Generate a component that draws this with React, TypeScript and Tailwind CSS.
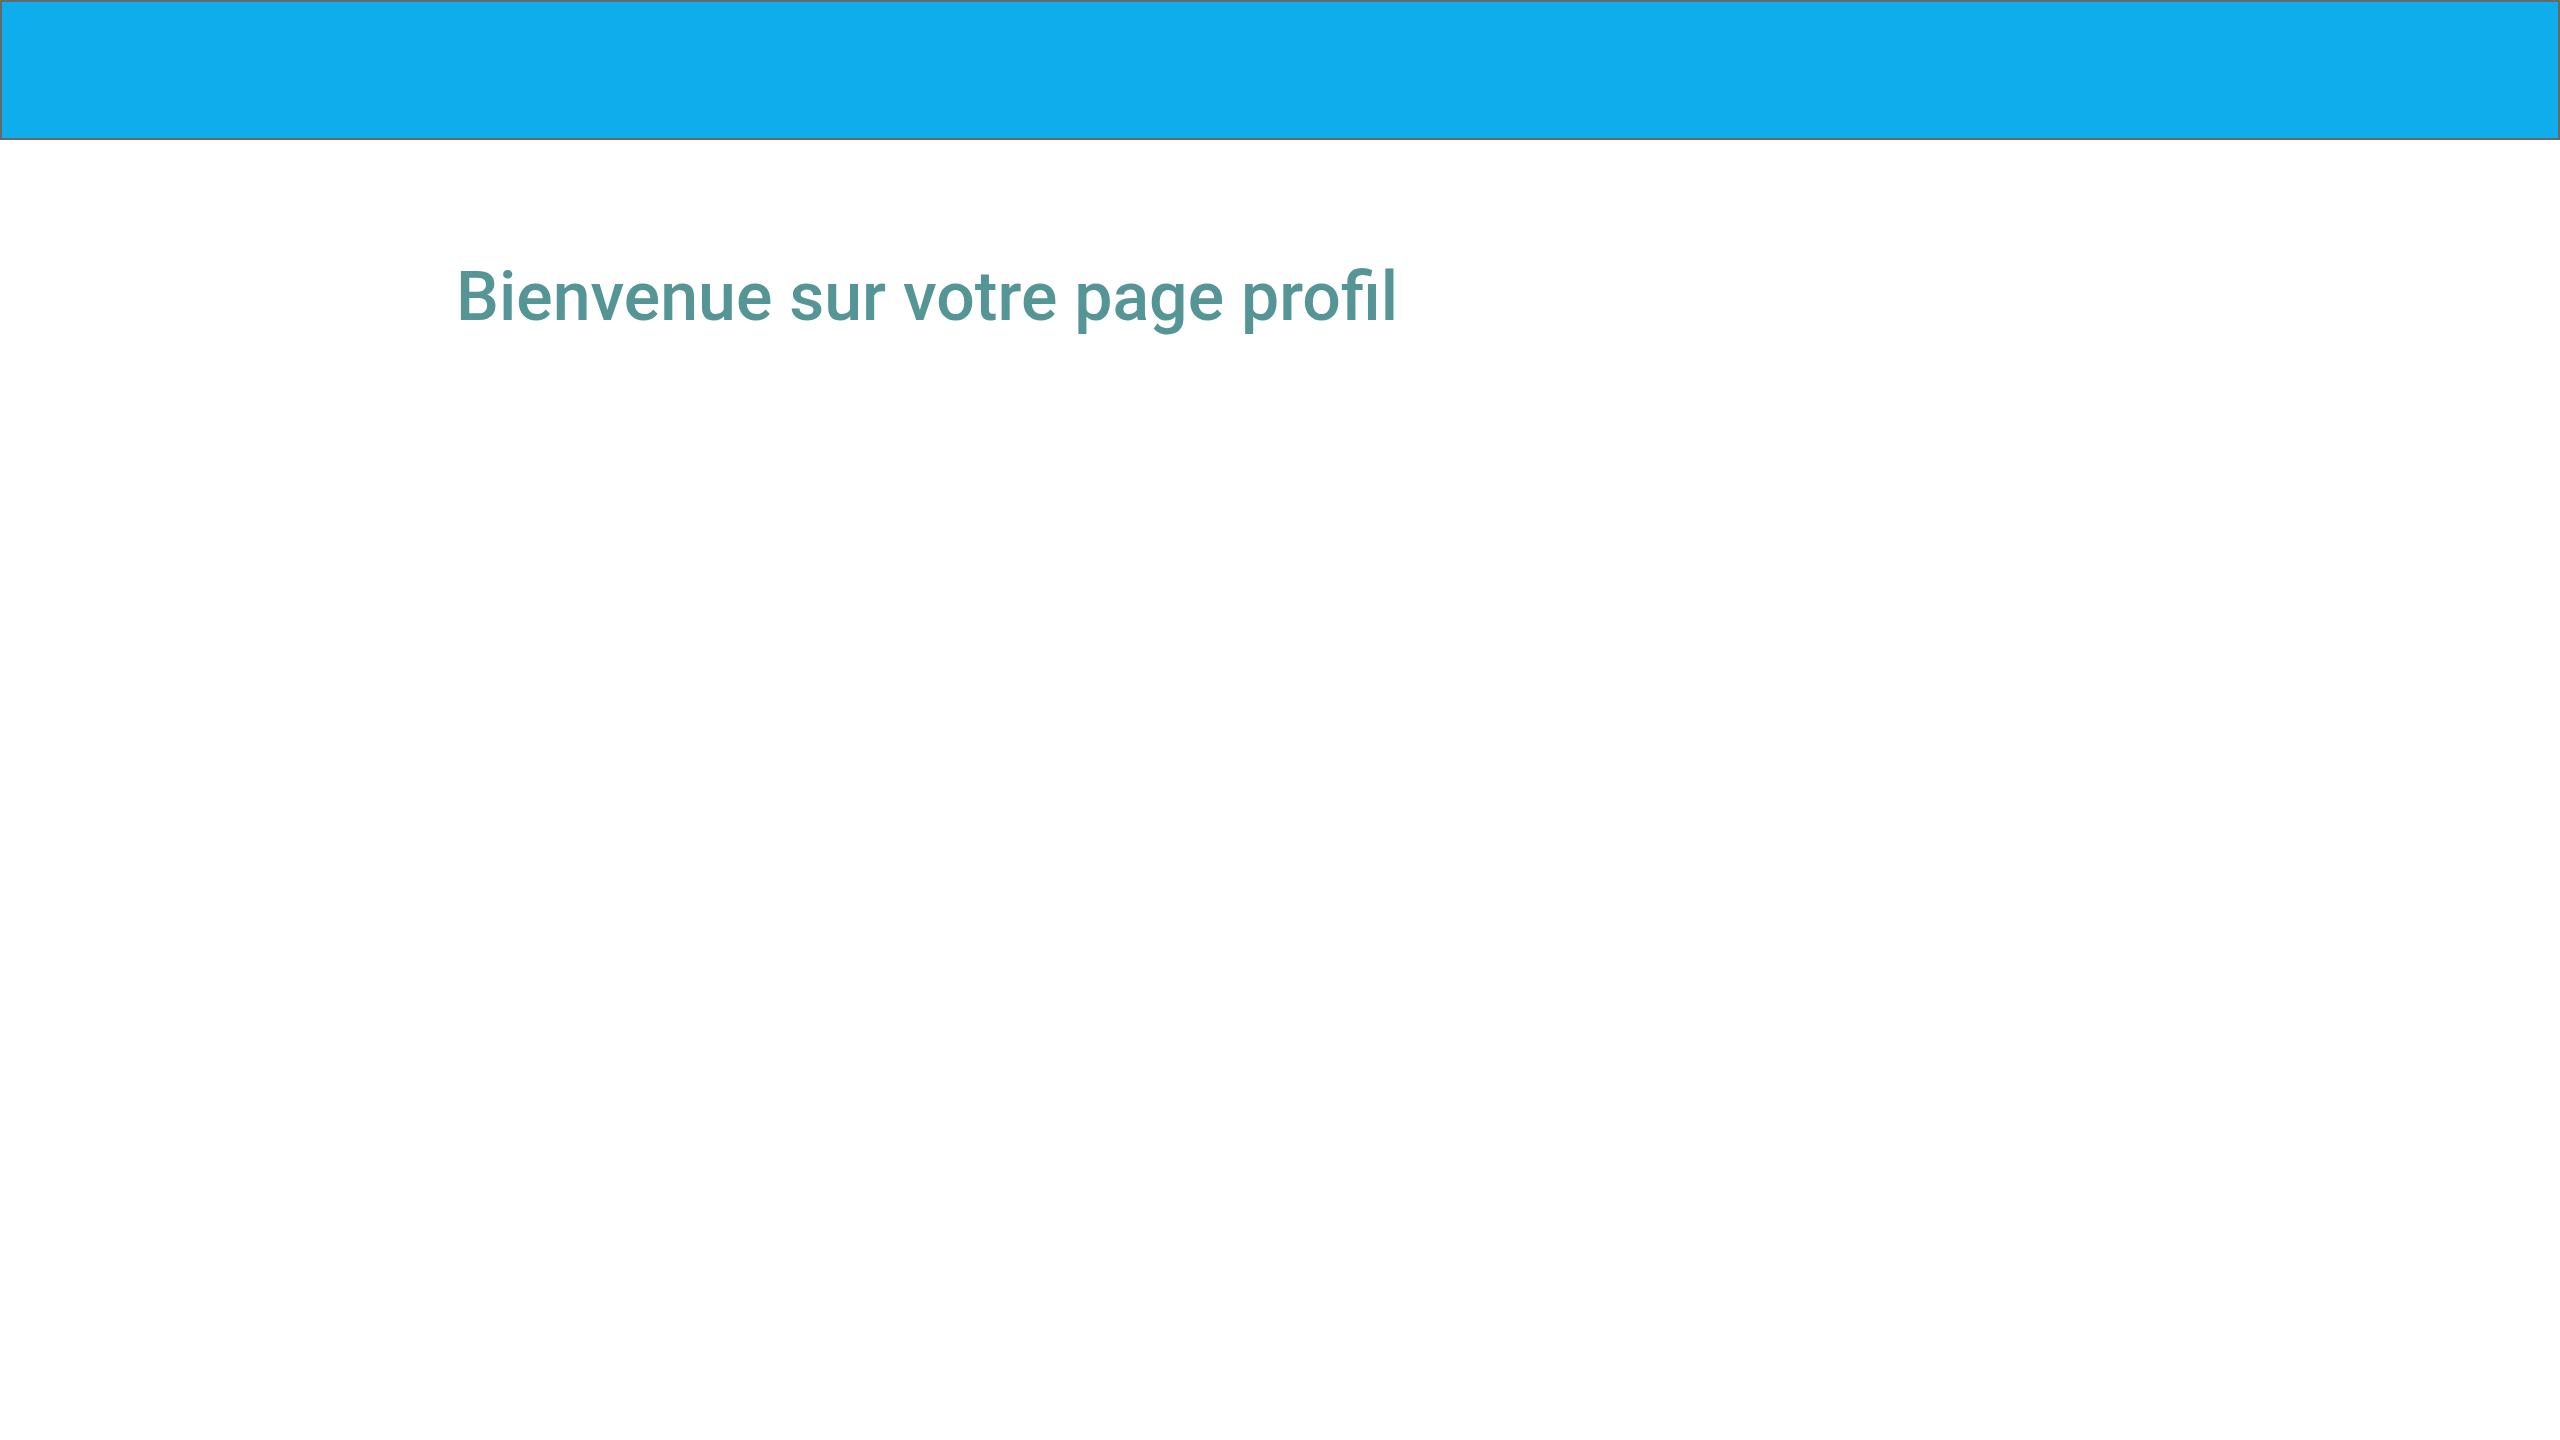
export default function App() {
  return (
    <div className="min-h-screen bg-white font-['Roboto',sans-serif]">
      <header className="h-[140px] w-full border-2 border-[#686868] bg-[#10adec]" />
      <main className="pl-[456px] pt-[117px]">
        <h1 className="text-[68px] font-medium leading-[normal] text-[#559595]">
          Bienvenue sur votre page profil
        </h1>
      </main>
    </div>
  );
}
